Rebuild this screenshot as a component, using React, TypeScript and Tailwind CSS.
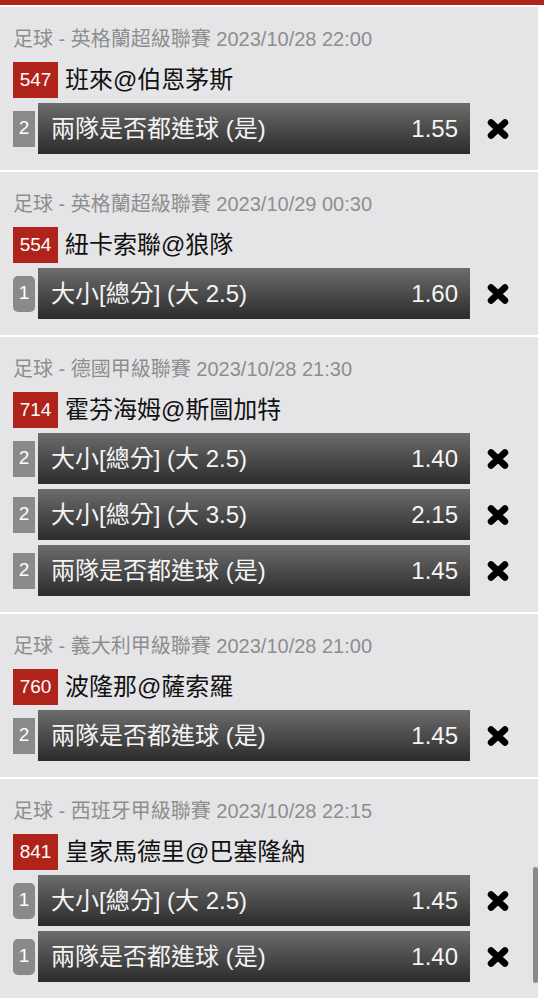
type Pick = { n: number; label: string; odds: string };
type Match = { league: string; time: string; code: string; teams: string; picks: Pick[] };

const matches: Match[] = [
  {
    league: '英格蘭超級聯賽',
    time: '2023/10/28 22:00',
    code: '547',
    teams: '班來@伯恩茅斯',
    picks: [{ n: 2, label: '兩隊是否都進球 (是)', odds: '1.55' }],
  },
  {
    league: '英格蘭超級聯賽',
    time: '2023/10/29 00:30',
    code: '554',
    teams: '紐卡索聯@狼隊',
    picks: [{ n: 1, label: '大小[總分] (大 2.5)', odds: '1.60' }],
  },
  {
    league: '德國甲級聯賽',
    time: '2023/10/28 21:30',
    code: '714',
    teams: '霍芬海姆@斯圖加特',
    picks: [
      { n: 2, label: '大小[總分] (大 2.5)', odds: '1.40' },
      { n: 2, label: '大小[總分] (大 3.5)', odds: '2.15' },
      { n: 2, label: '兩隊是否都進球 (是)', odds: '1.45' },
    ],
  },
  {
    league: '義大利甲級聯賽',
    time: '2023/10/28 21:00',
    code: '760',
    teams: '波隆那@薩索羅',
    picks: [{ n: 2, label: '兩隊是否都進球 (是)', odds: '1.45' }],
  },
  {
    league: '西班牙甲級聯賽',
    time: '2023/10/28 22:15',
    code: '841',
    teams: '皇家馬德里@巴塞隆納',
    picks: [
      { n: 1, label: '大小[總分] (大 2.5)', odds: '1.45' },
      { n: 1, label: '兩隊是否都進球 (是)', odds: '1.40' },
    ],
  },
];

function CloseIcon() {
  return (
    <svg width="24" height="22" viewBox="0 0 24 22" className="shrink-0">
      <path d="M5 4.5 L19 17.5 M19 4.5 L5 17.5" stroke="#000" strokeWidth="6.5" strokeLinecap="round" />
    </svg>
  );
}

function PickRow({ pick }: { pick: Pick }) {
  return (
    <div className="flex items-center">
      <div
        className={`flex h-9 w-[22px] items-center justify-center bg-[#8a8a8a] text-[19px] text-white ${
          pick.n === 1 ? 'rounded-[5px]' : ''
        }`}
      >
        {pick.n}
      </div>
      <div className="ml-[3px] flex h-[51px] w-[432px] items-center justify-between bg-gradient-to-b from-[#6d6d6d] to-[#2c2c2c] pl-[13px] pr-[12px] text-[24px] text-[#f4f4f4]">
        <span>{pick.label}</span>
        <span>{pick.odds}</span>
      </div>
      <div className="flex flex-1 justify-center">
        <CloseIcon />
      </div>
    </div>
  );
}

function MatchCard({ m }: { m: Match }) {
  return (
    <section className="bg-[#e5e5e7] pl-[13px] pr-[12px] pt-5 pb-4">
      <div className="h-6 text-[20px] leading-6 text-[#8e8e8e]">
        足球 - {m.league} {m.time}
      </div>
      <div className="mt-[11px] flex h-9 items-center">
        <span className="flex h-9 w-[45px] items-center justify-center bg-[#b0231b] text-[19px] text-white">
          {m.code}
        </span>
        <span className="ml-[7px] text-[24px] text-[#111]">{m.teams}</span>
      </div>
      <div className="mt-[5px] flex flex-col gap-[5px]">
        {m.picks.map((p, i) => (
          <PickRow key={i} pick={p} />
        ))}
      </div>
    </section>
  );
}

export default function App() {
  return (
    <div
      className="relative h-[1000px] w-[544px] overflow-hidden bg-white"
      style={{ fontFamily: '"Liberation Sans", "Noto Sans CJK TC", sans-serif' }}
    >
      <div className="h-[5px] w-full bg-[#b1261c]" />
      <div className="mt-[2px] flex w-[538px] flex-col gap-[2px]">
        {matches.map((m, i) => (
          <MatchCard key={i} m={m} />
        ))}
      </div>
      <div className="absolute left-[533px] top-[867px] h-[116px] w-[5px] rounded-full bg-[#8a8a8a]" />
    </div>
  );
}
